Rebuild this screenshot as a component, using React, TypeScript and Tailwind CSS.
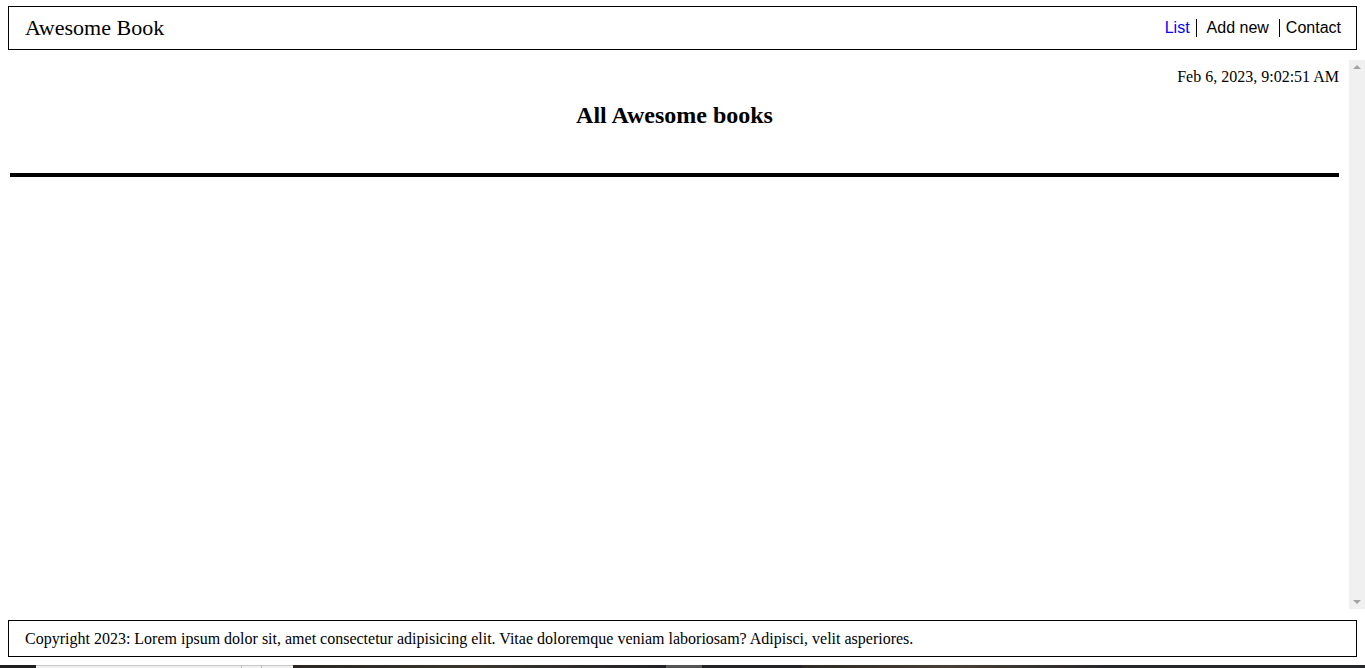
const App = () => {
  return (
    <div className="flex h-[668px] w-[1365px] flex-col overflow-hidden bg-white text-black">
      <header className="mx-2 mt-[6px] flex h-[44px] items-center justify-between border border-black pl-4 pr-[15px]">
        <h1 className="text-[22px] font-normal font-['Liberation_Serif',serif]">Awesome Book</h1>
        <ul className="flex items-center text-[16px] font-['Liberation_Sans',sans-serif]">
          <li className="border-r border-black pr-[6px] leading-[18px] text-[#0000ff]">List</li>
          <li className="ml-[10px] leading-[18px]">Add new</li>
          <li className="ml-[10px] border-l border-black pl-[6px] leading-[18px]">Contact</li>
        </ul>
      </header>

      <div className="mt-[10px] flex h-[551px]">
        <main className="flex-1 px-[10px] pt-[8px] font-['Liberation_Serif',serif]">
          <p className="text-right text-[16px] leading-[18px]">Feb 6, 2023, 9:02:51 AM</p>
          <h2 className="mt-[15px] text-center text-[24px] font-bold leading-[28px]">All Awesome books</h2>
          <hr className="mt-[44px] border-t-4 border-black" />
        </main>
        <div className="flex w-[16px] flex-col items-center justify-between bg-[#f0f0f0] pb-[5px] pt-[5px]">
          <svg width="8" height="4" viewBox="0 0 8 4">
            <path d="M0 4 L4 0 L8 4 Z" fill="#a3a3a3" />
          </svg>
          <svg width="8" height="4" viewBox="0 0 8 4">
            <path d="M0 0 L8 0 L4 4 Z" fill="#a3a3a3" />
          </svg>
        </div>
      </div>

      <footer className="mx-2 mt-[11px] flex h-[37px] items-center border border-black px-4 text-[16px] font-['Liberation_Serif',serif]">
        Copyright 2023: Lorem ipsum dolor sit, amet consectetur adipisicing elit. Vitae doloremque veniam laboriosam? Adipisci,
        velit asperiores.
      </footer>

      <div className="mt-[8px] flex h-[3px]">
        <div className="w-[36px] bg-[#1f1f1f]" />
        <div className="flex w-[257px] border-t border-[#c8c8c8] bg-[#f0f0f0]">
          <div className="ml-[205px] w-px bg-[#f0b030]" />
          <div className="ml-[19px] w-px bg-[#f0b030]" />
        </div>
        <div className="w-[373px] bg-gradient-to-r from-[#2a2622] via-[#3b352e] to-[#222226]" />
        <div className="w-[36px] bg-[#555555]" />
        <div className="w-[100px] bg-[#232326]" />
        <div className="w-[300px] bg-gradient-to-r from-[#2e2a26] via-[#4a3f35] to-[#28282a]" />
        <div className="flex-1 bg-[#26272a]" />
      </div>
    </div>
  );
};

export default App;
